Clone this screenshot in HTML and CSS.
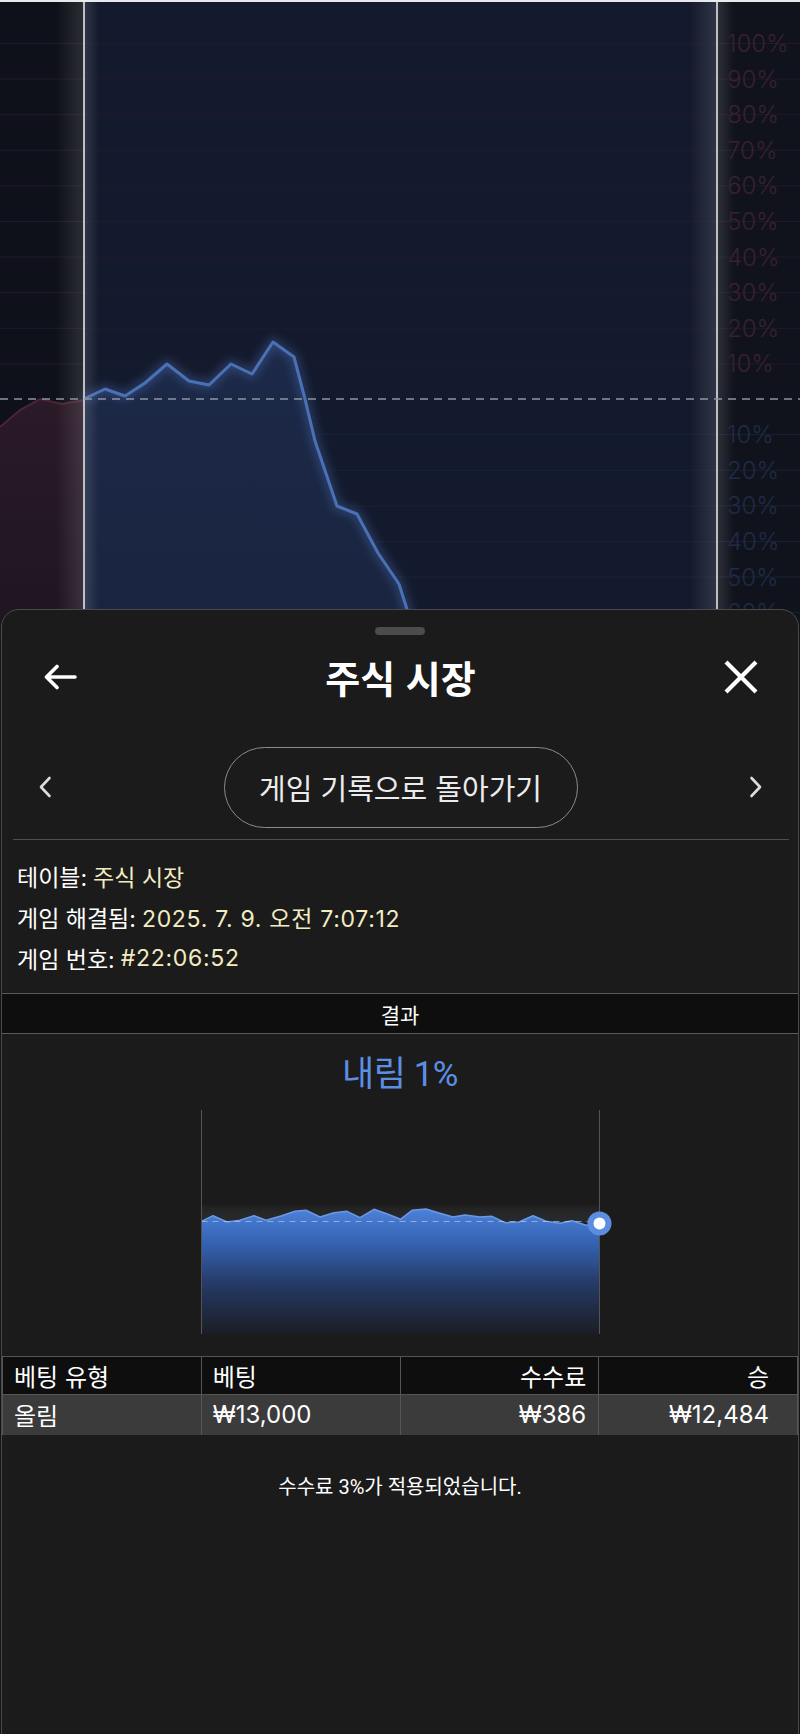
FILE: index.html
```html
<!DOCTYPE html>
<html lang="ko">
<head>
<meta charset="utf-8">
<title>주식 시장</title>
<link rel="stylesheet" href="styles.css">
</head>
<body>
<div class="page">
  <svg class="bgchart" width="800" height="640" viewBox="0 0 800 640" xmlns="http://www.w3.org/2000/svg">
    <defs>
      <linearGradient id="redFill" x1="0" y1="0" x2="0" y2="1">
        <stop offset="0" stop-color="#2b1a28"/>
        <stop offset="1" stop-color="#1d1520"/>
      </linearGradient>
      <linearGradient id="blueFill" x1="0" y1="0" x2="0" y2="1">
        <stop offset="0" stop-color="#1c2948"/>
        <stop offset="1" stop-color="#19243f"/>
      </linearGradient>
      <linearGradient id="glowL" x1="0" y1="0" x2="1" y2="0">
        <stop offset="0" stop-color="#ffffff" stop-opacity="0"/>
        <stop offset="1" stop-color="#ffffff" stop-opacity="0.12"/>
      </linearGradient>
      <linearGradient id="glowR" x1="0" y1="0" x2="1" y2="0">
        <stop offset="0" stop-color="#ffffff" stop-opacity="0.12"/>
        <stop offset="1" stop-color="#ffffff" stop-opacity="0"/>
      </linearGradient>
      <filter id="blur" x="-20%" y="-20%" width="140%" height="140%">
        <feGaussianBlur stdDeviation="5"/>
      </filter>
    </defs>
    <rect x="0" y="0" width="800" height="640" fill="#10131c"/>
    <rect x="0" y="0" width="84" height="640" fill="#0f111a"/>
    <rect x="84" y="0" width="633" height="640" fill="#141a2d"/>
    <rect x="0" y="0" width="800" height="2" fill="#e9e9ec"/>
    <g stroke="#22192a" stroke-width="1">
      <line x1="0" y1="43.5" x2="800" y2="43.5"/>
      <line x1="0" y1="79.1" x2="800" y2="79.1"/>
      <line x1="0" y1="114.7" x2="800" y2="114.7"/>
      <line x1="0" y1="150.3" x2="800" y2="150.3"/>
      <line x1="0" y1="185.9" x2="800" y2="185.9"/>
      <line x1="0" y1="221.5" x2="800" y2="221.5"/>
      <line x1="0" y1="257.1" x2="800" y2="257.1"/>
      <line x1="0" y1="292.7" x2="800" y2="292.7"/>
      <line x1="0" y1="328.3" x2="800" y2="328.3"/>
      <line x1="0" y1="363.9" x2="800" y2="363.9"/>
    </g>
    <g stroke="#1a2236" stroke-width="1">
      <line x1="0" y1="434.6" x2="800" y2="434.6"/>
      <line x1="0" y1="470.2" x2="800" y2="470.2"/>
      <line x1="0" y1="505.8" x2="800" y2="505.8"/>
      <line x1="0" y1="541.4" x2="800" y2="541.4"/>
      <line x1="0" y1="577" x2="800" y2="577"/>
      <line x1="0" y1="612.6" x2="800" y2="612.6"/>
    </g>
    <path d="M0,427 L20,410 L40,399 L62,404 L84,400 L84,640 L0,640 Z" fill="url(#redFill)"/>
    <path d="M0,427 L20,410 L40,399 L62,404 L84,400" fill="none" stroke="#4b2537" stroke-width="2"/>
    <path d="M84,399 L105,389 L125,396 L145,383 L167,364 L189,381 L209,385 L231,364 L252,374 L273,342 L294,357 L305,399 L315,441 L337,506 L357,514 L378,553 L399,584 L412,625 L418,640 L84,640 Z" fill="url(#blueFill)"/>
    <path d="M84,399 L105,389 L125,396 L145,383 L167,364 L189,381 L209,385 L231,364 L252,374 L273,342 L294,357 L305,399 L315,441 L337,506 L357,514 L378,553 L399,584 L412,625 L418,640" fill="none" stroke="#4d76c4" stroke-width="7" stroke-opacity="0.45" filter="url(#blur)"/>
    <path d="M84,399 L105,389 L125,396 L145,383 L167,364 L189,381 L209,385 L231,364 L252,374 L273,342 L294,357 L305,399 L315,441 L337,506 L357,514 L378,553 L399,584 L412,625 L418,640" fill="none" stroke="#4a70b5" stroke-width="3" stroke-linejoin="round"/>
    <rect x="56" y="0" width="28" height="640" fill="url(#glowL)"/>
    <rect x="85" y="0" width="14" height="640" fill="url(#glowR)"/>
    <rect x="690" y="0" width="27" height="640" fill="url(#glowL)"/>
    <rect x="718" y="0" width="16" height="640" fill="url(#glowR)"/>
    <line x1="84" y1="2" x2="84" y2="640" stroke="#bfc0c6" stroke-width="2"/>
    <line x1="717" y1="2" x2="717" y2="640" stroke="#bfc0c6" stroke-width="2"/>
    <line x1="0" y1="399" x2="800" y2="399" stroke="#8e94a6" stroke-width="1.5" stroke-dasharray="8 6"/>
    <g class="pct pct-up">
      <text x="727" y="43.5">100%</text>
      <text x="727" y="79.1">90%</text>
      <text x="727" y="114.7">80%</text>
      <text x="727" y="150.3">70%</text>
      <text x="727" y="185.9">60%</text>
      <text x="727" y="221.5">50%</text>
      <text x="727" y="257.1">40%</text>
      <text x="727" y="292.7">30%</text>
      <text x="727" y="328.3">20%</text>
      <text x="727" y="363.9">10%</text>
    </g>
    <g class="pct pct-down">
      <text x="727" y="434.6">10%</text>
      <text x="727" y="470.2">20%</text>
      <text x="727" y="505.8">30%</text>
      <text x="727" y="541.4">40%</text>
      <text x="727" y="577">50%</text>
      <text x="727" y="612.6">60%</text>
    </g>
  </svg>

  <section class="sheet">
    <div class="handle"></div>
    <header class="topbar">
      <button class="icon-btn back" aria-label="뒤로">
        <svg width="34" height="26" viewBox="0 0 34 26"><path d="M32 13 H4 M14 2.5 L3.5 13 L14 23.5" fill="none" stroke="#fff" stroke-width="3.6" stroke-linecap="round" stroke-linejoin="round"/></svg>
      </button>
      <h1 class="title">주식 시장</h1>
      <button class="icon-btn close" aria-label="닫기">
        <svg width="34" height="34" viewBox="0 0 34 34"><path d="M3.5 3.5 L30.5 30.5 M30.5 3.5 L3.5 30.5" fill="none" stroke="#fff" stroke-width="4.2" stroke-linecap="square"/></svg>
      </button>
    </header>

    <div class="navrow">
      <span class="chev">
        <svg width="14" height="22" viewBox="0 0 14 22"><path d="M11.5 2 L3 11 L11.5 20" fill="none" stroke="#dcdcdc" stroke-width="2.6" stroke-linecap="round" stroke-linejoin="round"/></svg>
      </span>
      <button class="pill">게임 기록으로 돌아가기</button>
      <span class="chev">
        <svg width="14" height="22" viewBox="0 0 14 22"><path d="M2.5 2 L11 11 L2.5 20" fill="none" stroke="#dcdcdc" stroke-width="2.6" stroke-linecap="round" stroke-linejoin="round"/></svg>
      </span>
    </div>

    <div class="divider"></div>

    <dl class="info">
      <div class="info-row"><dt>테이블:</dt><dd>주식 시장</dd></div>
      <div class="info-row"><dt>게임 해결됨:</dt><dd class="num">2025. 7. 9. 오전 7:07:12</dd></div>
      <div class="info-row"><dt>게임 번호:</dt><dd class="num">#22:06:52</dd></div>
    </dl>

    <div class="result-head">결과</div>

    <div class="result-body">
      <div class="result-value">내림 1%</div>
      <svg class="mini" width="400" height="224" viewBox="0 0 400 224" xmlns="http://www.w3.org/2000/svg">
        <defs>
          <linearGradient id="miniFill" x1="0" y1="98" x2="0" y2="224" gradientUnits="userSpaceOnUse">
            <stop offset="0" stop-color="#4c82dc"/>
            <stop offset="0.3" stop-color="#3360ad"/>
            <stop offset="0.6" stop-color="#253a65"/>
            <stop offset="1" stop-color="#1b1d24"/>
          </linearGradient>
          <linearGradient id="miniTop" x1="0" y1="0" x2="0" y2="1">
            <stop offset="0" stop-color="#ffffff" stop-opacity="0.02"/>
            <stop offset="1" stop-color="#6f8fc8" stop-opacity="0.12"/>
          </linearGradient>
        </defs>
        <rect x="1.5" y="95" width="398" height="18" fill="url(#miniTop)"/>
        <path d="M1.5,111.3 L13,105.7 L27,112 L40,110.3 L54,105.7 L66,110.3 L81,106 L95,101.3 L106,100.3 L120,107 L134,102.7 L147,101.3 L160,107.7 L174,99.3 L188,104.3 L200.5,109.3 L212,100.3 L226,99 L239,103 L253,107 L265,105 L280,107 L292,106.3 L305,112.7 L319,112 L333,105.7 L346,111.3 L360,113.3 L372,110.7 L386,115.3 L399.5,113.7 L399.5,224 L1.5,224 Z" fill="url(#miniFill)"/>
        <path d="M1.5,111.3 L13,105.7 L27,112 L40,110.3 L54,105.7 L66,110.3 L81,106 L95,101.3 L106,100.3 L120,107 L134,102.7 L147,101.3 L160,107.7 L174,99.3 L188,104.3 L200.5,109.3 L212,100.3 L226,99 L239,103 L253,107 L265,105 L280,107 L292,106.3 L305,112.7 L319,112 L333,105.7 L346,111.3 L360,113.3 L372,110.7 L386,115.3 L399.5,113.7" fill="none" stroke="#6a9ae6" stroke-width="1.5" stroke-linejoin="round"/>
        <line x1="1.5" y1="111.5" x2="399.5" y2="111.5" stroke="#c9d3e6" stroke-opacity="0.6" stroke-width="1.2" stroke-dasharray="6 5"/>
        <line x1="1.5" y1="0" x2="1.5" y2="224" stroke="#545454" stroke-width="1"/>
        <line x1="399.5" y1="0" x2="399.5" y2="224" stroke="#545454" stroke-width="1"/>
        <circle cx="399.5" cy="113.5" r="12" fill="#5b8de0"/>
        <circle cx="399.5" cy="113.5" r="6" fill="#ffffff"/>
      </svg>
    </div>

    <table class="bets">
      <thead>
        <tr><th class="l">베팅 유형</th><th class="l">베팅</th><th class="r">수수료</th><th class="r last">승</th></tr>
      </thead>
      <tbody>
        <tr><td class="l">올림</td><td class="l">₩13,000</td><td class="r">₩386</td><td class="r last">₩12,484</td></tr>
      </tbody>
    </table>

    <p class="note">수수료 3%가 적용되었습니다.</p>
  </section>
</div>
</body>
</html>
```

FILE: styles.css
```css
* { box-sizing: border-box; }
html, body {
  margin: 0;
  padding: 0;
  background: #10131c;
}
body {
  width: 800px;
  height: 1734px;
  overflow: hidden;
  font-family: Roboto, "Noto Sans CJK KR", "Noto Sans", sans-serif;
  color: #ffffff;
}
.page {
  position: relative;
  width: 800px;
  height: 1734px;
}
.bgchart {
  display: block;
}
.pct text {
  font-family: Inter, "Liberation Sans", sans-serif;
  font-weight: 300;
  font-size: 24px;
  dominant-baseline: central;
}
.pct-up text { fill: #3a2030; }
.pct-down text { fill: #1f2b47; }

.sheet {
  position: absolute;
  top: 609px;
  left: 1px;
  right: 1px;
  bottom: -4px;
  background: #1b1b1b;
  border: 1.5px solid #4a4a4a;
  border-radius: 18px 18px 0 0;
  display: flex;
  flex-direction: column;
}
.handle {
  width: 50px;
  height: 8px;
  border-radius: 4px;
  background: #4c4c4c;
  margin: 16.5px auto 0;
}
.topbar {
  display: grid;
  grid-template-columns: 1fr auto 1fr;
  align-items: center;
  height: 64px;
  margin-top: 10px;
  padding: 0 40px 0 41px;
}
.icon-btn {
  background: none;
  border: 0;
  padding: 0;
  display: flex;
  align-items: center;
  cursor: pointer;
}
.back { justify-self: start; }
.close { justify-self: end; }
.title {
  margin: 0;
  font-family: "Noto Sans CJK KR", sans-serif;
  font-size: 38px;
  font-weight: 700;
  line-height: 1;
  letter-spacing: 0;
}
.navrow {
  display: flex;
  align-items: center;
  justify-content: space-between;
  margin-top: 38px;
  padding: 0 35px 0 36px;
}
.chev { display: flex; }
.pill {
  width: 354px;
  height: 81px;
  border: 1.5px solid #8a8a8a;
  border-radius: 41px;
  background: transparent;
  color: #ececec;
  font-family: "Noto Sans CJK KR", sans-serif;
  font-size: 29px;
  font-weight: 400;
  letter-spacing: 0;
  padding: 0;
}
.divider {
  height: 1.5px;
  background: #4e4e4e;
  margin: 11px 9px 0 11px;
}
.info {
  margin: 15px 0 0;
  padding: 0 0 0 15px;
  font-family: Inter, "Noto Sans CJK KR", sans-serif;
}
.info-row {
  display: flex;
  gap: 6px;
  height: 41px;
  align-items: center;
  font-size: 23px;
  letter-spacing: 0;
}
.info-row dt { color: #ffffff; }
.info-row dd { margin: 0; color: #f3ecc2; }
.info-row dd.num { letter-spacing: 0.7px; }

.result-head {
  margin-top: 15px;
  height: 41px;
  border-top: 1.5px solid #595959;
  border-bottom: 1.5px solid #595959;
  background: #0e0e0e;
  display: flex;
  align-items: center;
  justify-content: center;
  font-size: 21px;
}
.result-body {
  display: flex;
  flex-direction: column;
  align-items: center;
}
.result-value {
  margin-top: 16px;
  height: 40px;
  display: flex;
  align-items: center;
  font-size: 35px;
  color: #5b8fe3;
  letter-spacing: -0.5px;
}
.mini {
  display: block;
  margin-top: 20px;
  overflow: visible;
}
.bets {
  margin-top: 22px;
  width: 100%;
  border-collapse: collapse;
  table-layout: fixed;
  font-family: Inter, "Noto Sans CJK KR", sans-serif;
  font-size: 24px;
}
.bets th, .bets td {
  border: 1.5px solid #555555;
  font-weight: 400;
  padding: 0 12px 0 11px;
  white-space: nowrap;
}
.bets th {
  background: #0e0e0e;
  height: 38px;
}
.bets td {
  background: #3b3b3b;
  height: 40px;
  border-bottom: 0;
}
.bets .l { text-align: left; }
.bets .r { text-align: right; }
.bets .last { padding-right: 28px; }
.note {
  margin: 40px 0 0;
  text-align: center;
  font-size: 20px;
  line-height: 24px;
  letter-spacing: 0;
}
```
